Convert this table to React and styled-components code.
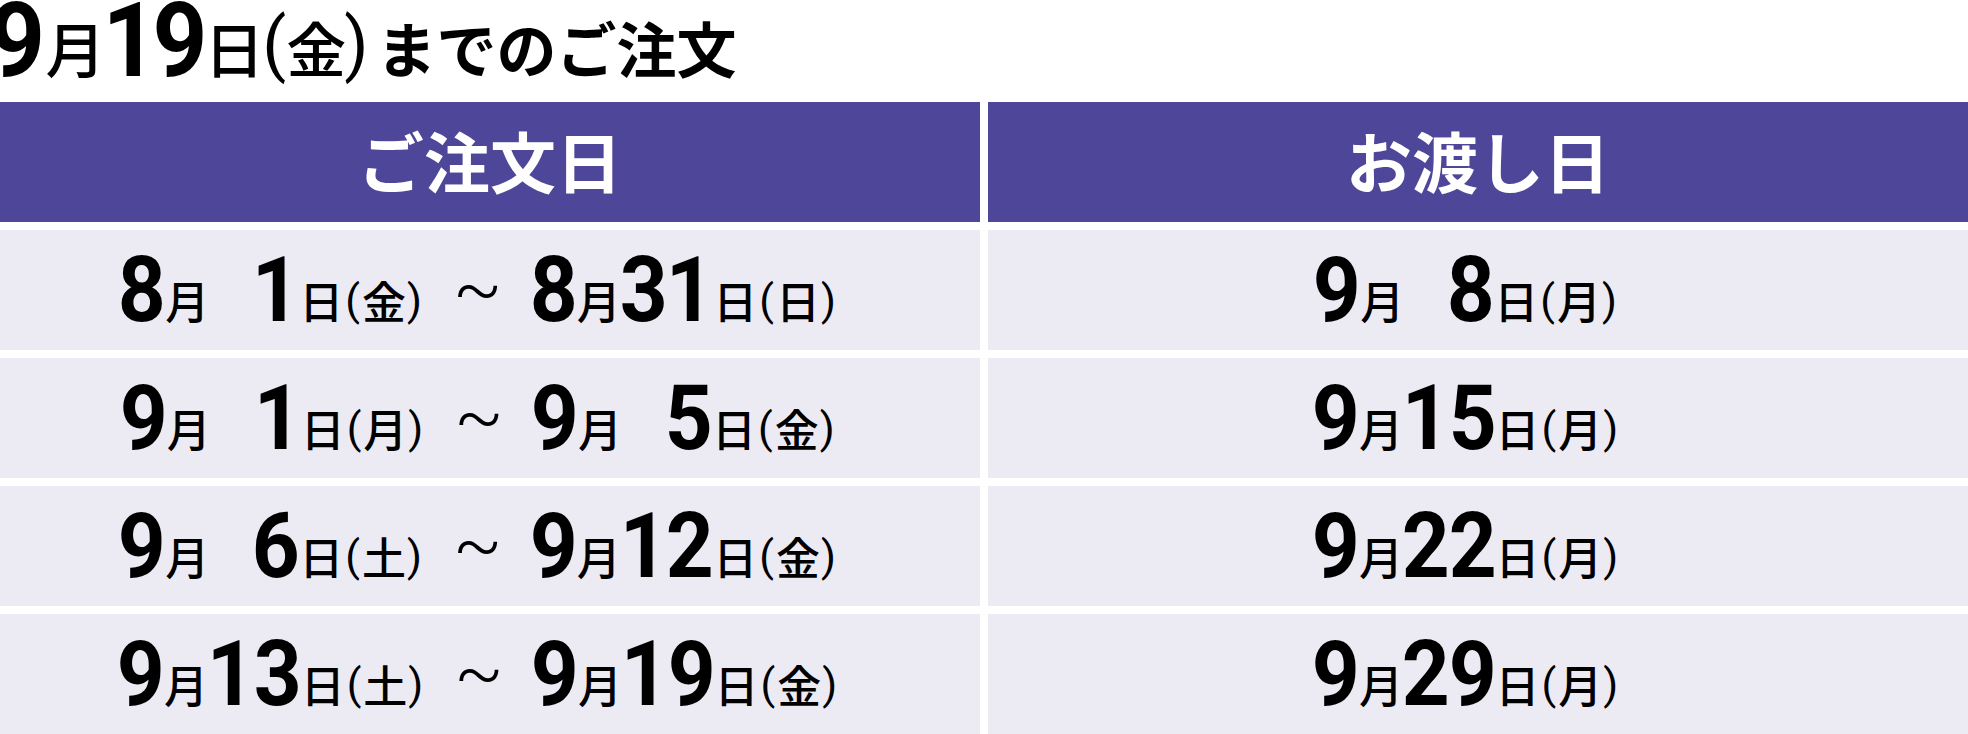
import styled, { createGlobalStyle } from "styled-components";

const GlobalStyle = createGlobalStyle`
  html, body {
    margin: 0;
    padding: 0;
    background: #fff;
  }
  body {
    font-family: "Noto Sans CJK JP", sans-serif;
    color: #000;
    overflow: hidden;
  }
`;

const Page = styled.div`
  width: 1968px;
  height: 734px;
  overflow: hidden;
`;

const Title = styled.h1`
  margin: 0 0 21px -12px;
  font-family: Roboto, "Noto Sans CJK JP", sans-serif;
  font-size: 104px;
  font-weight: 700;
  line-height: 81px;
  white-space: nowrap;
`;

const TitleKanji = styled.span`
  font-family: "Noto Sans CJK JP", sans-serif;
  font-size: 60px;
  font-weight: 500;
  line-height: 1;
  vertical-align: 3px;
`;

const TitleParen = styled.span`
  font-family: Roboto, sans-serif;
  font-size: 70px;
  font-weight: 400;
  line-height: 1;
  vertical-align: 8px;
  margin: 0 ${(p) => p.$right || 0}px 0 ${(p) => p.$left || 0}px;
`;

const TitleText = styled.span`
  font-family: "Noto Sans CJK JP", sans-serif;
  font-size: 60px;
  font-weight: 700;
  line-height: 1;
  margin-left: 8px;
  vertical-align: 3px;
`;

const Table = styled.div`
  display: grid;
  grid-template-columns: 980px 980px;
  grid-template-rows: repeat(5, 120px);
  column-gap: 8px;
  row-gap: 8px;
`;

const Head = styled.div`
  background: #4e4698;
  color: #fff;
  display: flex;
  align-items: center;
  justify-content: center;
  padding-bottom: 6px;
  box-sizing: border-box;
  font-family: "Noto Sans CJK JP", sans-serif;
  font-size: 66px;
  font-weight: 700;
  line-height: 1;
`;

const Cell = styled.div`
  background: #ecebf4;
  box-sizing: border-box;
  padding: 2px 24px 0 0;
  text-align: center;
  white-space: nowrap;
  font-family: Roboto, "Noto Sans CJK JP", sans-serif;
  font-size: 90px;
  font-weight: 700;
  line-height: 118px;
  overflow: hidden;
`;

// 1桁ずつ少し細く描く（元画像の数字は詰まった書体）
const Digit = styled.span`
  display: inline-block;
  transform: scaleX(${(p) => p.$scale || 0.93});
  margin: 0 ${(p) => p.$pull || -0.03}em;
`;

// 日の数字は2桁分の枠に右寄せ
const DaySlot = styled.span`
  display: inline-block;
  min-width: 1em;
  text-align: right;
`;

const Kanji = styled.span`
  font-family: "Noto Sans CJK JP", sans-serif;
  font-size: 44px;
  font-weight: 500;
  line-height: 1;
  vertical-align: 2px;
`;

const Paren = styled.span`
  font-family: Roboto, sans-serif;
  font-size: 43px;
  font-weight: 400;
  line-height: 1;
  vertical-align: 6px;
  margin: 0 ${(p) => p.$gap || 0}px;
`;

const Tilde = styled.span`
  font-family: Roboto, sans-serif;
  font-size: 72px;
  font-weight: 300;
  line-height: 1;
  vertical-align: 8px;
  margin: 0 28px 0 30px;
`;

function Digits({ value, scale, pull }) {
  return String(value)
    .split("")
    .map((c, i) => (
      <Digit key={i} $scale={scale} $pull={pull}>
        {c}
      </Digit>
    ));
}

function DateText({ m, d, w }) {
  return (
    <>
      <Digits value={m} />
      <Kanji>月</Kanji>
      <DaySlot>
        <Digits value={d} />
      </DaySlot>
      <Kanji>日</Kanji>
      <Paren $gap={2}>(</Paren>
      <Kanji>{w}</Kanji>
      <Paren $gap={1}>)</Paren>
    </>
  );
}

const rows = [
  { from: { m: 8, d: 1, w: "金" }, to: { m: 8, d: 31, w: "日" }, give: { m: 9, d: 8, w: "月" } },
  { from: { m: 9, d: 1, w: "月" }, to: { m: 9, d: 5, w: "金" }, give: { m: 9, d: 15, w: "月" } },
  { from: { m: 9, d: 6, w: "土" }, to: { m: 9, d: 12, w: "金" }, give: { m: 9, d: 22, w: "月" } },
  { from: { m: 9, d: 13, w: "土" }, to: { m: 9, d: 19, w: "金" }, give: { m: 9, d: 29, w: "月" } },
];

export default function App() {
  return (
    <Page>
      <GlobalStyle />
      <Title>
        <Digits value={9} scale={0.95} pull={-0.01} />
        <TitleKanji>月</TitleKanji>
        <Digits value={19} scale={0.92} pull={-0.05} />
        <TitleKanji>日</TitleKanji>
        <TitleParen $left={-2}>(</TitleParen>
        <TitleKanji>金</TitleKanji>
        <TitleParen $left={-2}>)</TitleParen>
        <TitleText>までのご注文</TitleText>
      </Title>
      <Table>
        <Head>ご注文日</Head>
        <Head>お渡し日</Head>
        {rows.map((r, i) => [
          <Cell key={"a" + i}>
            <DateText {...r.from} />
            <Tilde>~</Tilde>
            <DateText {...r.to} />
          </Cell>,
          <Cell key={"b" + i}>
            <DateText {...r.give} />
          </Cell>,
        ])}
      </Table>
    </Page>
  );
}
